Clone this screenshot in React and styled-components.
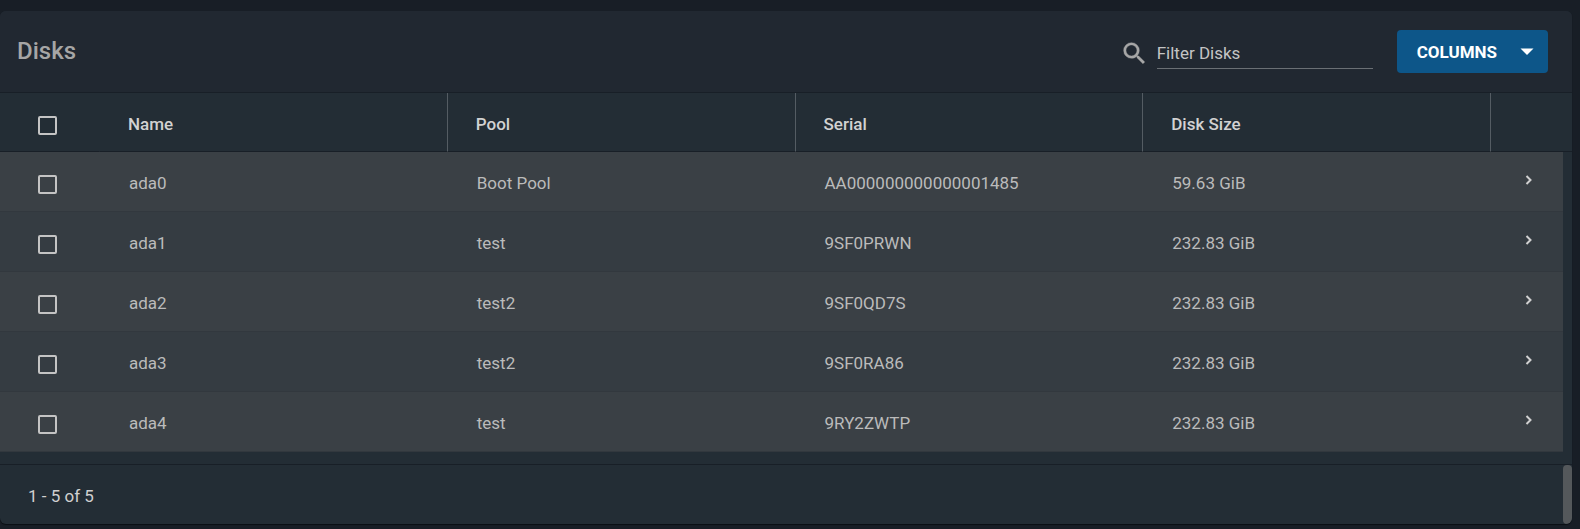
import React from 'react';
import styled, { createGlobalStyle } from 'styled-components';

const c = {
  page: '#181e26',
  card: '#232d35',
  toolbar: '#212831',
  line: '#181f27',
  divider: '#545c63',
  rowOdd: '#3a4045',
  rowEven: '#353c42',
  rowLine: '#32383e',
  text: '#bbbbbb',
  heading: '#d2d2d2',
  primary: '#0d5689',
};

const GlobalStyle = createGlobalStyle`
  *, *::before, *::after { box-sizing: border-box; }
  body {
    margin: 0;
    background: ${c.page};
    color: ${c.text};
    font: 400 17px/24px Roboto, sans-serif;
  }
`;

const Page = styled.main`
  padding: 11px 8px 4px 0;
`;

const Card = styled.section`
  overflow: hidden;
  border-radius: 6px;
  background: ${c.card};
  box-shadow: 0 1px 1px #0b0f14;
`;

const Toolbar = styled.header`
  display: flex;
  align-items: center;
  gap: 24px;
  height: 82px;
  padding: 0 24px 0 17px;
  background: ${c.toolbar};
  border-bottom: 1px solid ${c.line};
`;

const Title = styled.h1`
  margin: 0 auto 0 0;
  padding-bottom: 2px;
  font-size: 24px;
  font-weight: 500;
  line-height: 32px;
  color: #a6a6a6;
`;

const Search = styled.label`
  display: flex;
  align-items: center;
  gap: 8px;
  padding-top: 3px;
  color: #a6a6a6;
`;

const FilterInput = styled.input`
  width: 216px;
  height: 32px;
  padding: 0;
  border: 0;
  border-bottom: 1px solid #6a6f74;
  border-radius: 0;
  outline: 0;
  background: transparent;
  color: #c4c4c4;
  font: inherit;
  &::placeholder { color: #c4c4c4; opacity: 1; }
`;

const ColumnsButton = styled.button`
  display: flex;
  align-items: center;
  gap: 18px;
  height: 43px;
  padding: 0 9px 0 20px;
  border: 0;
  border-radius: 4px;
  background: ${c.primary};
  color: #fff;
  font: 700 17px/24px Roboto, sans-serif;
  cursor: pointer;
`;

const Table = styled.table`
  width: 100%;
  table-layout: fixed;
  border-collapse: separate;
  border-spacing: 0;
`;

const HeadCell = styled.th`
  width: ${(p) => p.$width || 'auto'};
  height: 59px;
  padding: ${(p) => (p.$check ? '6px 0 0 38px' : '4px 28px 0')};
  border-right: ${(p) => (p.$last ? '0' : `1px solid ${p.$check ? c.card : c.divider}`)};
  border-bottom: 1px solid ${c.line};
  color: ${c.heading};
  font-weight: 500;
  text-align: left;
`;

const Row = styled.tr`
  background: ${c.rowEven};
  &:nth-child(odd) { background: ${c.rowOdd}; }
`;

const Cell = styled.td`
  height: 60px;
  padding: ${(p) => (p.$check ? '4px 0 0 38px' : '2px 29px 0')};
  box-shadow: inset 0 -1px ${c.rowLine};
`;

const ExpandCell = styled.td`
  padding: 0 24px 8px 0;
  border-right: 9px solid ${c.card};
  box-shadow: inset 0 -1px ${c.rowLine};
  text-align: right;
`;

const ExpandButton = styled.button`
  display: inline-flex;
  padding: 0;
  border: 0;
  background: none;
  color: #d0d0d0;
  vertical-align: middle;
  cursor: pointer;
`;

const Checkbox = styled.input.attrs({ type: 'checkbox' })`
  display: block;
  appearance: none;
  width: 19px;
  height: 19px;
  margin: 0;
  border: 2px solid #c4c4c4;
  border-radius: 2px;
  cursor: pointer;
  &:checked { background: ${c.primary}; }
`;

const Footer = styled.footer`
  display: flex;
  align-items: center;
  justify-content: space-between;
  height: 60px;
  margin-top: 12px;
  padding-left: 28px;
  border-top: 1px solid ${c.line};
  color: #d0d0d0;
`;

const PageRange = styled.span`
  padding-top: 2px;
`;

const ScrollThumb = styled.div`
  align-self: stretch;
  width: 9px;
  border-radius: 4px;
  background: #54585b;
`;

const disks = [
  { name: 'ada0', pool: 'Boot Pool', serial: 'AA000000000000001485', size: '59.63 GiB' },
  { name: 'ada1', pool: 'test', serial: '9SF0PRWN', size: '232.83 GiB' },
  { name: 'ada2', pool: 'test2', serial: '9SF0QD7S', size: '232.83 GiB' },
  { name: 'ada3', pool: 'test2', serial: '9SF0RA86', size: '232.83 GiB' },
  { name: 'ada4', pool: 'test', serial: '9RY2ZWTP', size: '232.83 GiB' },
];

const SearchIcon = () => (
  <svg width="29" height="29" viewBox="0 0 24 24" fill="currentColor" stroke="currentColor" strokeWidth="0.3" aria-hidden="true">
    <path d="M15.5 14h-.79l-.28-.27A6.47 6.47 0 0 0 16 9.5 6.5 6.5 0 1 0 9.5 16c1.61 0 3.09-.59 4.23-1.57l.27.28v.79l5 4.99L20.49 19l-4.99-5zm-6 0C7.01 14 5 11.99 5 9.5S7.01 5 9.5 5 14 7.01 14 9.5 11.99 14 9.5 14z" />
  </svg>
);

const ArrowDown = () => (
  <svg width="24" height="24" viewBox="0 0 24 24" fill="currentColor" aria-hidden="true">
    <path d="M5.5 8.500h13l-6.500 6.500z" />
  </svg>
);

const ChevronRight = () => (
  <svg width="20" height="20" viewBox="0 0 20 20" fill="none" stroke="currentColor" strokeWidth="2" aria-hidden="true">
    <path d="M7.500 6 11.500 10l-4 4" />
  </svg>
);

export default function App() {
  return (
    <>
      <GlobalStyle />
      <Page>
        <Card>
          <Toolbar>
            <Title>Disks</Title>
            <Search>
              <SearchIcon />
              <FilterInput type="text" placeholder="Filter Disks" aria-label="Filter Disks" />
            </Search>
            <ColumnsButton type="button">
              COLUMNS
              <ArrowDown />
            </ColumnsButton>
          </Toolbar>
          <Table>
            <thead>
              <tr>
                <HeadCell $check $width="100px">
                  <Checkbox aria-label="Select all disks" />
                </HeadCell>
                <HeadCell scope="col">Name</HeadCell>
                <HeadCell scope="col">Pool</HeadCell>
                <HeadCell scope="col">Serial</HeadCell>
                <HeadCell scope="col">Disk Size</HeadCell>
                <HeadCell $last $width="81px" />
              </tr>
            </thead>
            <tbody>
              {disks.map((disk) => (
                <Row key={disk.name}>
                  <Cell $check>
                    <Checkbox aria-label={`Select ${disk.name}`} />
                  </Cell>
                  <Cell>{disk.name}</Cell>
                  <Cell>{disk.pool}</Cell>
                  <Cell>{disk.serial}</Cell>
                  <Cell>{disk.size}</Cell>
                  <ExpandCell>
                    <ExpandButton type="button" aria-label={`Expand ${disk.name}`}>
                      <ChevronRight />
                    </ExpandButton>
                  </ExpandCell>
                </Row>
              ))}
            </tbody>
          </Table>
          <Footer>
            <PageRange>1 - 5 of 5</PageRange>
            <ScrollThumb />
          </Footer>
        </Card>
      </Page>
    </>
  );
}
